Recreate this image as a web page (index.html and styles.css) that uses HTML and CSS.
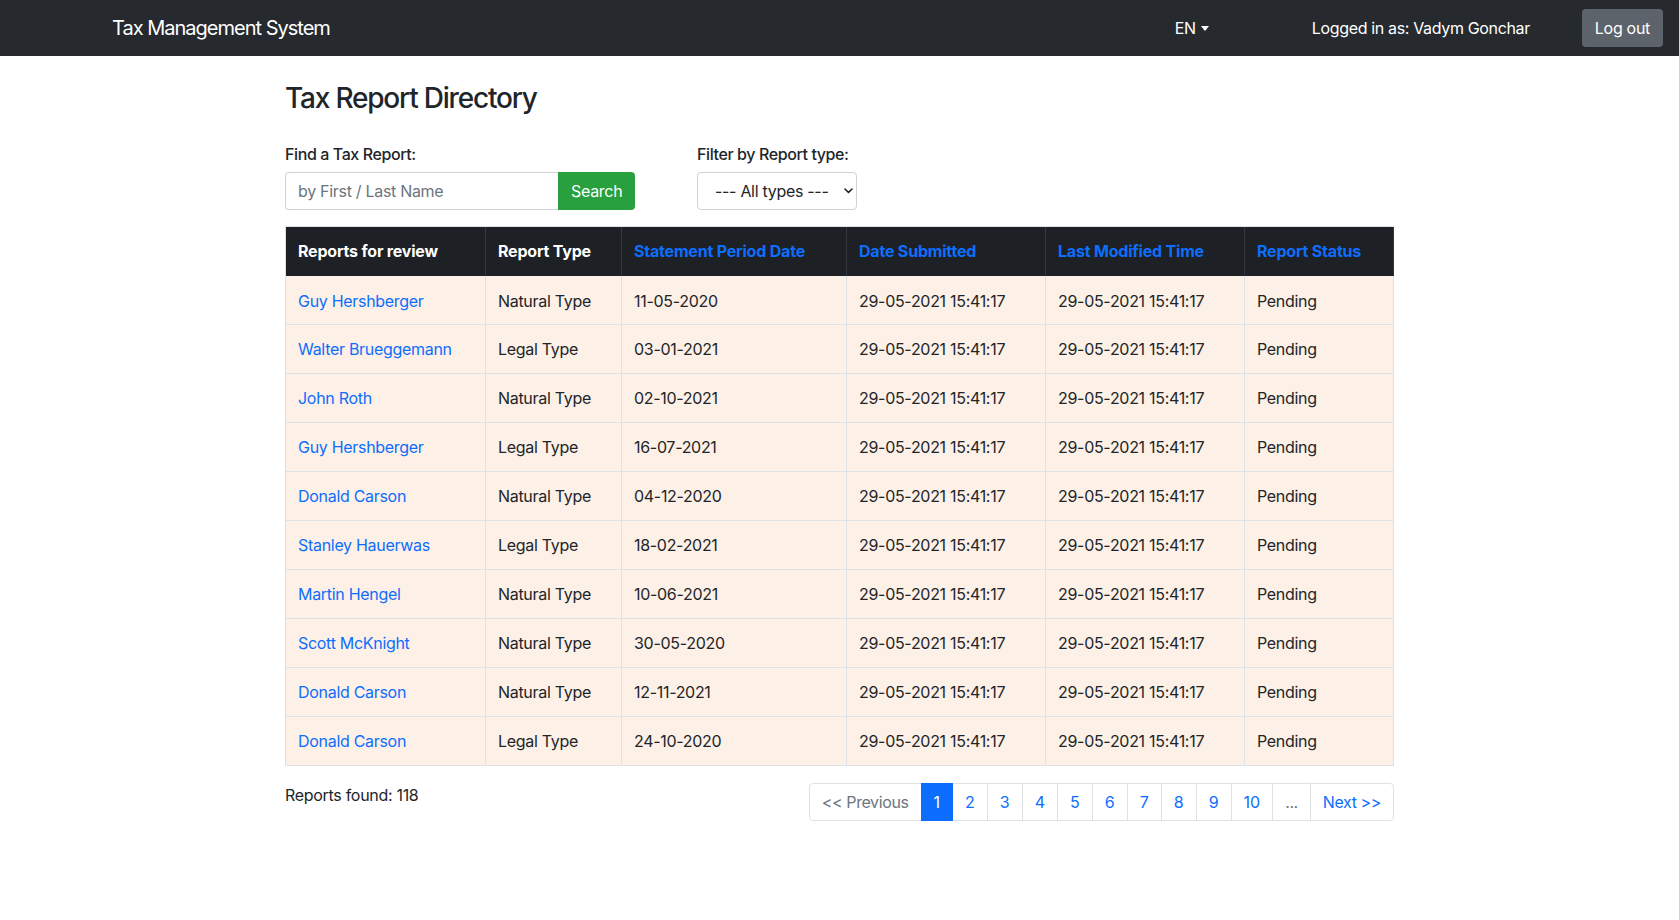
FILE: index.html
```html
<!DOCTYPE html>
<html lang="en">
<head>
<meta charset="utf-8">
<title>Tax Report Directory</title>
<link rel="stylesheet" href="styles.css">
</head>
<body>
<nav class="navbar">
  <a class="brand" href="#">Tax Management System</a>
  <div class="nav-right">
    <a class="lang" href="#">EN<span class="caret"></span></a>
    <span class="user">Logged in as: Vadym Gonchar</span>
    <button class="btn btn-logout">Log out</button>
  </div>
</nav>
<main class="container">
  <h3 class="title">Tax Report Directory</h3>
  <div class="filters">
    <div class="field field-search">
      <label class="form-label">Find a Tax Report:</label>
      <div class="input-group">
        <input class="form-control" type="text" placeholder="by First / Last Name">
        <button class="btn btn-success">Search</button>
      </div>
    </div>
    <div class="field field-type">
      <label class="form-label">Filter by Report type:</label>
      <div class="select-wrap">
        <select class="form-select">
          <option>--- All types ---</option>
        </select>
        <svg class="chev" width="9" height="6" viewBox="0 0 9 6"><path d="M1 1l3.5 3.5L8 1" fill="none" stroke="#222" stroke-width="1.6" stroke-linecap="round" stroke-linejoin="round"/></svg>
      </div>
    </div>
  </div>
  <table class="reports">
    <colgroup>
      <col class="c1"><col class="c2"><col class="c3"><col class="c4"><col class="c5"><col class="c6">
    </colgroup>
    <thead>
      <tr>
        <th>Reports for review</th>
        <th>Report Type</th>
        <th class="sort">Statement Period Date</th>
        <th class="sort">Date Submitted</th>
        <th class="sort">Last Modified Time</th>
        <th class="sort">Report Status</th>
      </tr>
    </thead>
    <tbody>
      <tr><td><a href="#">Guy Hershberger</a></td><td>Natural Type</td><td>11-05-2020</td><td>29-05-2021 15:41:17</td><td>29-05-2021 15:41:17</td><td>Pending</td></tr>
      <tr><td><a href="#">Walter Brueggemann</a></td><td>Legal Type</td><td>03-01-2021</td><td>29-05-2021 15:41:17</td><td>29-05-2021 15:41:17</td><td>Pending</td></tr>
      <tr><td><a href="#">John Roth</a></td><td>Natural Type</td><td>02-10-2021</td><td>29-05-2021 15:41:17</td><td>29-05-2021 15:41:17</td><td>Pending</td></tr>
      <tr><td><a href="#">Guy Hershberger</a></td><td>Legal Type</td><td>16-07-2021</td><td>29-05-2021 15:41:17</td><td>29-05-2021 15:41:17</td><td>Pending</td></tr>
      <tr><td><a href="#">Donald Carson</a></td><td>Natural Type</td><td>04-12-2020</td><td>29-05-2021 15:41:17</td><td>29-05-2021 15:41:17</td><td>Pending</td></tr>
      <tr><td><a href="#">Stanley Hauerwas</a></td><td>Legal Type</td><td>18-02-2021</td><td>29-05-2021 15:41:17</td><td>29-05-2021 15:41:17</td><td>Pending</td></tr>
      <tr><td><a href="#">Martin Hengel</a></td><td>Natural Type</td><td>10-06-2021</td><td>29-05-2021 15:41:17</td><td>29-05-2021 15:41:17</td><td>Pending</td></tr>
      <tr><td><a href="#">Scott McKnight</a></td><td>Natural Type</td><td>30-05-2020</td><td>29-05-2021 15:41:17</td><td>29-05-2021 15:41:17</td><td>Pending</td></tr>
      <tr><td><a href="#">Donald Carson</a></td><td>Natural Type</td><td>12-11-2021</td><td>29-05-2021 15:41:17</td><td>29-05-2021 15:41:17</td><td>Pending</td></tr>
      <tr><td><a href="#">Donald Carson</a></td><td>Legal Type</td><td>24-10-2020</td><td>29-05-2021 15:41:17</td><td>29-05-2021 15:41:17</td><td>Pending</td></tr>
    </tbody>
  </table>
  <div class="footer-row">
    <div class="found">Reports found: 118</div>
    <ul class="pagination">
      <li class="page-item disabled wide"><span class="page-link">&lt;&lt; Previous</span></li>
      <li class="page-item active"><span class="page-link">1</span></li>
      <li class="page-item"><a class="page-link" href="#">2</a></li>
      <li class="page-item"><a class="page-link" href="#">3</a></li>
      <li class="page-item"><a class="page-link" href="#">4</a></li>
      <li class="page-item"><a class="page-link" href="#">5</a></li>
      <li class="page-item"><a class="page-link" href="#">6</a></li>
      <li class="page-item"><a class="page-link" href="#">7</a></li>
      <li class="page-item"><a class="page-link" href="#">8</a></li>
      <li class="page-item"><a class="page-link" href="#">9</a></li>
      <li class="page-item"><a class="page-link" href="#">10</a></li>
      <li class="page-item disabled wide"><span class="page-link">...</span></li>
      <li class="page-item wide"><a class="page-link" href="#">Next &gt;&gt;</a></li>
    </ul>
  </div>
</main>
</body>
</html>
```

FILE: styles.css
```css
* { box-sizing: border-box; }
html, body { margin: 0; padding: 0; }
body {
  font-family: Inter, "Noto Sans", "Liberation Sans", sans-serif;
  font-size: 16px;
  line-height: 1.5;
  color: #212529;
  background: #fff;
}
a { color: #0d6efd; text-decoration: none; }

.navbar {
  height: 56px;
  background: #262a2f;
  display: flex;
  align-items: center;
  padding: 0 16px 0 112px;
}
.brand {
  color: #fff;
  font-size: 20px;
  line-height: 30px;
  letter-spacing: -1px;
}
.nav-right {
  margin-left: auto;
  display: flex;
  align-items: center;
}
.lang {
  color: #fff;
  display: flex;
  align-items: center;
  letter-spacing: -0.3px;
}
.caret {
  display: inline-block;
  margin-left: 5px;
  margin-top: 1px;
  border-top: 5px solid #fff;
  border-left: 4px solid transparent;
  border-right: 4px solid transparent;
}
.user {
  color: #fff;
  margin-left: 103px;
  letter-spacing: -0.35px;
}
.btn {
  font-family: inherit;
  font-size: 16px;
  line-height: 24px;
  padding: 6px 12px;
  border: 1px solid transparent;
  border-radius: 4px;
  cursor: pointer;
  letter-spacing: -0.3px;
}
.btn-logout {
  margin-left: 52px;
  background: #5c636a;
  color: #fff;
  height: 38px;
}

.container {
  width: 1109px;
  margin: 0 auto;
}
.title {
  font-size: 28px;
  font-weight: 500;
  line-height: 1.2;
  margin: 26px 0 26px;
  letter-spacing: -1.2px;
}
.filters {
  display: flex;
  gap: 62px;
  margin-bottom: 16px;
}
.form-label {
  display: block;
  margin-bottom: 6px;
  font-weight: 500;
  letter-spacing: -0.4px;
}
.input-group {
  display: flex;
}
.form-control {
  width: 273px;
  height: 38px;
  font-family: inherit;
  font-size: 16px;
  padding: 6px 12px;
  border: 1px solid #ced4da;
  border-right: none;
  border-radius: 4px 0 0 4px;
  color: #212529;
  letter-spacing: -0.3px;
}
.form-control::placeholder { color: #6c757d; }
.btn-success {
  background: #28a03e;
  color: #fff;
  height: 38px;
  width: 77px;
  border-radius: 0 4px 4px 0;
}
.select-wrap {
  position: relative;
  width: 160px;
}
.form-select {
  -webkit-appearance: none;
  appearance: none;
  width: 160px;
  height: 38px;
  font-family: inherit;
  font-size: 16px;
  color: #212529;
  padding: 6px 24px 6px 17px;
  border: 1px solid #ced4da;
  border-radius: 4px;
  background: #fff;
  letter-spacing: -0.3px;
}
.chev {
  position: absolute;
  right: 4px;
  top: 16px;
  pointer-events: none;
}

.reports {
  width: 100%;
  table-layout: fixed;
  border-collapse: separate;
  border-spacing: 0;
  border-top: 1px solid #dee2e6;
  border-left: 1px solid #dee2e6;
}
.c1 { width: 200px; }
.c2 { width: 136px; }
.c3 { width: 225px; }
.c4 { width: 199px; }
.c5 { width: 199px; }
.c6 { width: 149px; }
.reports th, .reports td {
  padding: 12px 12px;
  text-align: left;
  vertical-align: top;
  white-space: nowrap;
  letter-spacing: -0.3px;
}
.reports thead th {
  background: #1d2024;
  color: #fff;
  font-weight: 700;
  letter-spacing: -0.2px;
  border-right: 1px solid #32383e;
  border-bottom: 1px solid #1d2024;
}
.reports thead th.sort { color: #0d6efd; }
.reports td {
  background: #fdf0e6;
  border-right: 1px solid #dee2e6;
  border-bottom: 1px solid #dee2e6;
}
.reports tbody tr:first-child td { padding-top: 13px; padding-bottom: 11px; }

.footer-row {
  display: flex;
  justify-content: space-between;
  align-items: flex-start;
  margin-top: 17px;
}
.found { letter-spacing: -0.3px; }
.pagination {
  list-style: none;
  display: flex;
  margin: 0;
  padding: 0;
}
.page-link {
  display: block;
  padding: 6px 12px;
  line-height: 24px;
  border: 1px solid #dee2e6;
  margin-left: -1px;
  color: #0d6efd;
  background: #fff;
  letter-spacing: 0;
}
.page-item.wide .page-link { letter-spacing: -0.4px; }
.page-item:first-child .page-link {
  margin-left: 0;
  border-radius: 4px 0 0 4px;
}
.page-item:last-child .page-link { border-radius: 0 4px 4px 0; }
.page-item.disabled .page-link { color: #6c757d; }
.page-item.active .page-link {
  background: #0d6efd;
  border-color: #0d6efd;
  color: #fff;
  position: relative;
}
```
